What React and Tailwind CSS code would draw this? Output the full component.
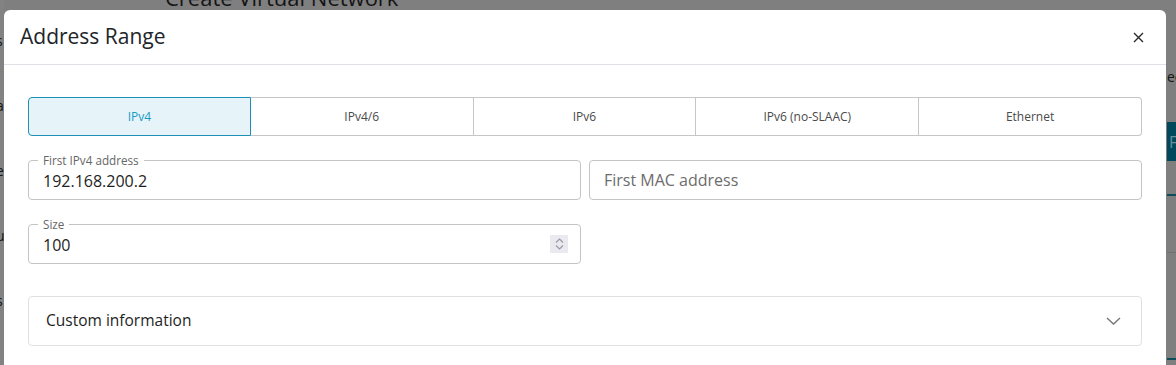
import React from "react";

// ============================================================
// Address Range modal over the "Create Virtual Network" page
// ============================================================

const TABS = ["IPv4", "IPv4/6", "IPv6", "IPv6 (no-SLAAC)", "Ethernet"];

function OutlinedField({ label, value, placeholder, spinner }) {
  return (
    <div className="relative h-[40px] rounded-[4px] border border-[#c4c4c4] flex items-center px-[14px]">
      {label && (
        <span className="absolute left-[9px] -top-[9px] bg-white px-[5px] text-[11.7px] leading-[16px] text-[#666]">
          {label}
        </span>
      )}
      {value ? (
        <span className="text-[16px] text-[#1e1e1e] pt-[2px]">{value}</span>
      ) : (
        <span className="text-[16px] text-[#6c6c6c]">{placeholder}</span>
      )}
      {spinner && (
        <div className="ml-auto mr-[-2px] w-[18px] h-[18px] bg-[#e9e9ef] flex flex-col items-center justify-center gap-[2px]">
          <svg width="9" height="5" viewBox="0 0 9 5" fill="none" stroke="#9a9aa2" strokeWidth="1.2">
            <path d="M1 4.5 L4.5 1 L8 4.5" />
          </svg>
          <svg width="9" height="5" viewBox="0 0 9 5" fill="none" stroke="#9a9aa2" strokeWidth="1.2">
            <path d="M1 0.5 L4.5 4 L8 0.5" />
          </svg>
        </div>
      )}
    </div>
  );
}

export default function App() {
  const selected = 0;

  return (
    <div
      className="relative w-[1176px] h-[365px] overflow-hidden bg-[#7f7f7f]"
      style={{ fontFamily: '"Open Sans", "Noto Sans", sans-serif' }}
    >
      {/* Page behind the backdrop */}
      <div className="absolute left-[165px] -top-[19px] text-[22px] text-[#141414] whitespace-nowrap">
        Create Virtual Network
      </div>
      <div className="absolute left-0 top-0 w-[4px] h-full bg-[#828282]" />
      <div className="absolute -left-[4px] top-[30px] flex flex-col gap-[44px] text-[14px] text-[#141414]">
        <span>s</span>
        <span>a</span>
        <span>el</span>
        <span>u</span>
        <span>s</span>
      </div>
      <div className="absolute left-[1167px] top-[66px] text-[14px] text-[#141414]">ec</div>
      <div className="absolute left-[1167px] top-[122px] w-[20px] h-[39px] bg-[#00485c] text-[#6b8e97] text-[16px] pl-[2px] pt-[8px]">
        F
      </div>
      <div className="absolute left-[1167px] top-[194px] w-[20px] h-[2px] bg-[#0e4b5b]" />
      <div className="absolute left-[1167px] top-[252px] w-[20px] h-[1px] bg-[#707070]" />
      <div className="absolute left-[1167px] top-[358px] w-[20px] h-[2px] bg-[#0e4b5b]" />

      {/* Modal */}
      <div className="absolute left-[4px] top-[10px] w-[1162px] h-[400px] bg-white rounded-t-[6px]">
        {/* Header */}
        <div className="h-[55px] flex items-center justify-between pl-4 pr-[22px] border-b border-[#dee2e6]">
          <h2 className="text-[21px] text-[#212529]">Address Range</h2>
          <svg width="11" height="11" viewBox="0 0 11 11" stroke="#2a2a2a" strokeWidth="1.4">
            <path d="M1 1 L10 10 M10 1 L1 10" />
          </svg>
        </div>

        {/* Body */}
        <div className="px-6 pt-[32px]">
          {/* Network type tabs */}
          <div className="grid grid-cols-5 h-[39px]">
            {TABS.map((t, i) => (
              <div
                key={t}
                className={
                  "flex items-center justify-center text-[12px] border-y border-r " +
                  (i === 0 ? "border-l rounded-l-[4px] " : "") +
                  (i === TABS.length - 1 ? "rounded-r-[4px] " : "") +
                  (i === selected
                    ? "bg-[#e6f4fa] border-[#1b8fb4] text-[#1a9ac6]"
                    : "bg-white border-[#c6c6c6] text-[#4a4a4a]")
                }
              >
                {t}
              </div>
            ))}
          </div>

          {/* Fields */}
          <div className="mt-[24px] grid grid-cols-2 gap-x-2 gap-y-[24px]">
            <OutlinedField label="First IPv4 address" value="192.168.200.2" />
            <OutlinedField placeholder="First MAC address" />
            <OutlinedField label="Size" value="100" spinner />
          </div>

          {/* Custom information accordion */}
          <div className="mt-[32px] h-[50px] rounded-[4px] border border-[#e0e0e0] flex items-center justify-between pl-[17px] pr-[20px]">
            <span className="text-[15.5px] text-[#1e1e1e]">Custom information</span>
            <svg width="15" height="8" viewBox="0 0 15 8" fill="none" stroke="#777" strokeWidth="1.4">
              <path d="M1 1 L7.5 7 L14 1" />
            </svg>
          </div>
        </div>
      </div>
    </div>
  );
}
